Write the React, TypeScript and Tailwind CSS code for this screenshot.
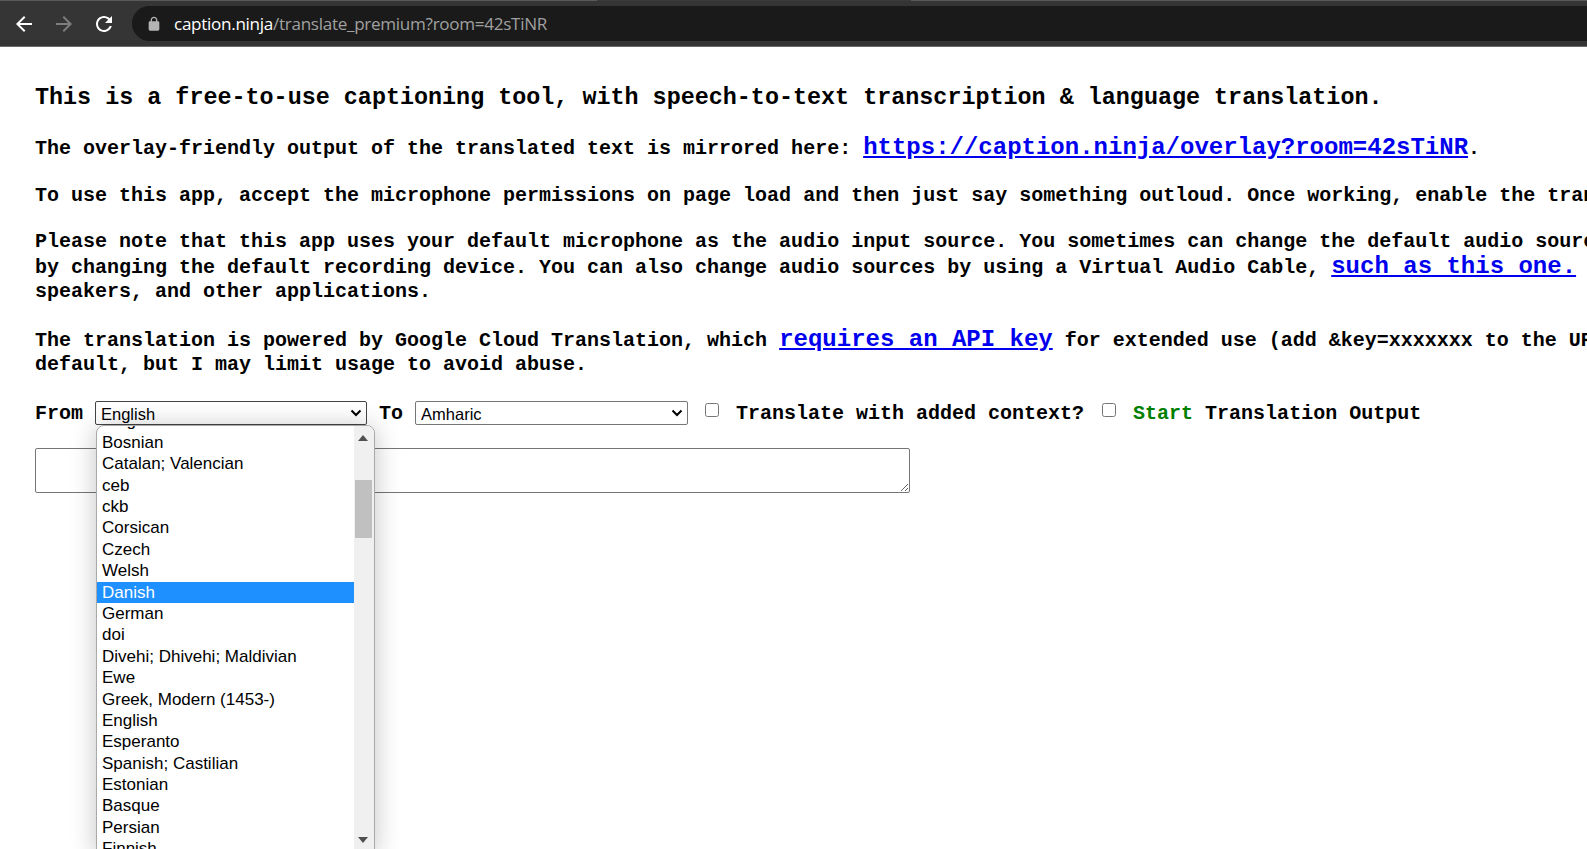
const langs = [
  "Bulgarian", "Bosnian", "Catalan; Valencian", "ceb", "ckb", "Corsican", "Czech", "Welsh", "Danish", "German", "doi",
  "Divehi; Dhivehi; Maldivian", "Ewe", "Greek, Modern (1453-)", "English", "Esperanto", "Spanish; Castilian",
  "Estonian", "Basque", "Persian", "Finnish",
];

const Chevron = () => (
  <svg viewBox="0 0 12 8" className="pointer-events-none absolute right-[5px] top-[8px] h-[8px] w-[12px] fill-none stroke-black stroke-[2]">
    <path d="M1.5 1.5 6 6l4.5-4.5" />
  </svg>
);

const BrowserBar = () => (
  <div className="h-[47px] bg-[#353535]">
    <div className="h-px bg-[#5a5a5a]">
      <div className="ml-[597px] h-px w-[314px] bg-[#3a3a3a]" />
    </div>
    <div className="flex h-[46px] items-center border-b border-b-[#6a6a6a] pb-[5px] pt-[5px]">
      <svg viewBox="0 0 24 24" className="ml-[12px] size-[24px] fill-white"><path d="M20 11H7.83l5.59-5.59L12 4l-8 8 8 8 1.41-1.41L7.83 13H20v-2z" /></svg>
      <svg viewBox="0 0 24 24" className="ml-[16px] size-[24px] fill-[#7d7d7d]"><path d="M12 4l-1.41 1.41L16.17 11H4v2h12.17l-5.58 5.59L12 20l8-8z" /></svg>
      <svg viewBox="0 0 24 24" className="ml-[16px] size-[24px] fill-white"><path d="M17.65 6.35C16.2 4.9 14.21 4 12 4c-4.42 0-7.99 3.58-7.99 8s3.57 8 7.99 8c3.73 0 6.84-2.55 7.73-6h-2.08c-.82 2.33-3.04 4-5.65 4-3.31 0-6-2.69-6-6s2.69-6 6-6c1.66 0 3.14.69 4.22 1.78L13 11h7V4l-2.35 2.35z" /></svg>
      <div className="ml-[16px] flex h-[35px] flex-1 items-center rounded-l-full bg-[#1a1a1a] pl-[14px]">
        <svg viewBox="0 0 24 24" className="size-[16px] fill-[#b4b4b4]"><path d="M18 8h-1V6c0-2.76-2.24-5-5-5S7 3.24 7 6v2H6c-1.1 0-2 .9-2 2v10c0 1.1.9 2 2 2h12c1.1 0 2-.9 2-2V10c0-1.1-.9-2-2-2zM9 6c0-1.66 1.34-3 3-3s3 1.34 3 3v2H9V6z" /></svg>
        <span className="ml-[12px] font-['Open_Sans',sans-serif] text-[17.1px] tracking-[-0.3px] text-[#a0a0a0]">
          <span className="text-white">caption.ninja</span>/translate_premium?room=42sTiNR
        </span>
      </div>
    </div>
  </div>
);

const Dropdown = () => (
  <div className="absolute left-[1px] top-full z-10 flex h-[430px] w-[279px] overflow-hidden rounded-t-[8px] border border-[#a9a9a9] bg-white font-['Liberation_Sans',sans-serif] text-[17px] font-normal text-black shadow-[0_2px_26px_rgba(0,0,0,0.24)]">
    <ul className="-mt-[15px] flex-1">
      {langs.map((l) => (
        <li key={l} className={`flex h-[21.4px] items-center whitespace-nowrap pl-[5px] ${l === "Danish" ? "bg-[#1e90ff] text-white" : ""}`}>{l}</li>
      ))}
    </ul>
    <div className="relative w-[20px] bg-[#f0f0f0]">
      <div className="absolute left-[4px] top-[9px] size-0 border-x-[5px] border-b-[6px] border-x-transparent border-b-[#505050]" />
      <div className="absolute left-[1px] right-[2px] top-[54px] h-[58px] bg-[#c0c0c0]" />
      <div className="absolute bottom-[11px] left-[4px] size-0 border-x-[5px] border-t-[6px] border-x-transparent border-t-[#505050]" />
    </div>
  </div>
);

export default function App() {
  return (
    <div className="h-[849px] w-[1587px] overflow-hidden bg-white">
      <BrowserBar />
      <div className="whitespace-nowrap pl-[35px] font-['Liberation_Mono',monospace] font-bold text-black">
        <p className="mt-[38px] text-[23.4px] leading-[27px]">
          This is a free-to-use captioning tool, with speech-to-text transcription &amp; language translation.
        </p>
        <p className="mt-[22px] text-[20px] leading-[27px]">
          The overlay-friendly output of the translated text is mirrored here: <a href="#" className="text-[24px] text-[#0000ee] underline">https://caption.ninja/overlay?room=42sTiNR</a>.
        </p>
        <p className="mt-[20px] text-[20px] leading-[27px]">
          To use this app, accept the microphone permissions on page load and then just say something outloud. Once working, enable the translation
        </p>
        <p className="mt-[21px] text-[20px] leading-[24.5px]">
          Please note that this app uses your default microphone as the audio input source. You sometimes can change the default audio source
          <br />
          by changing the default recording device. You can also change audio sources by using a Virtual Audio Cable, <a href="#" className="text-[24px] text-[#0000ee] underline">such as this one.</a>
          <br />
          speakers, and other applications.
        </p>
        <p className="mt-[23px] text-[20px] leading-[24.5px]">
          The translation is powered by Google Cloud Translation, which <a href="#" className="text-[24px] text-[#0000ee] underline">requires an API key</a> for extended use (add &amp;key=xxxxxxx to the URL
          <br />
          default, but I may limit usage to avoid abuse.
        </p>
        <div className="mt-[23px] flex h-[24px] items-center text-[20px]">
          <span className="mt-[2px]">From</span>
          <div className="relative ml-[12px]">
            <select className="block h-[24px] w-[272px] appearance-none rounded-[2px] border border-[#444] bg-white pl-[5px] font-['Liberation_Sans',sans-serif] text-[16.5px] font-normal">
              <option>English</option>
            </select>
            <Chevron />
            <Dropdown />
          </div>
          <span className="ml-[12px] mt-[2px]">To</span>
          <div className="relative ml-[12px]">
            <select className="block h-[24px] w-[273px] appearance-none rounded-[2px] border border-[#767676] bg-white pl-[5px] font-['Liberation_Sans',sans-serif] text-[16.5px] font-normal">
              <option>Amharic</option>
            </select>
            <Chevron />
          </div>
          <input type="checkbox" className="mb-[5px] ml-[17px] size-[14px]" />
          <span className="ml-[17px] mt-[2px]">Translate with added context?</span>
          <input type="checkbox" className="mb-[5px] ml-[18px] size-[14px]" />
          <span className="ml-[17px] mt-[2px]"><span className="text-[#008000]">Start</span> Translation Output</span>
        </div>
        <textarea className="mt-[23px] block h-[45px] w-[875px] rounded-[2px] border border-[#767676] bg-white" />
      </div>
    </div>
  );
}
